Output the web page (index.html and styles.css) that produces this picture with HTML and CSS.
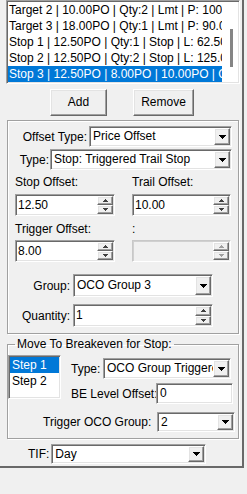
FILE: index.html
```html
<!DOCTYPE html>
<html lang="en">
<head>
  <meta charset="UTF-8">
  <title>Bracket Orders</title>
  <link rel="stylesheet" href="styles.css">
</head>
<body>
  <div class="panel">

    <!-- Order list -->
    <div class="listbox orders sunken">
      <div class="items">
        <div class="item">Target 2 | 10.00PO | Qty:2 | Lmt | P: 100.00</div>
        <div class="item">Target 3 | 18.00PO | Qty:1 | Lmt | P: 90.00</div>
        <div class="item">Stop 1 | 12.50PO | Qty:1 | Stop | L: 62.50</div>
        <div class="item">Stop 2 | 12.50PO | Qty:2 | Stop | L: 125.00</div>
        <div class="item sel">Stop 3 | 12.50PO | 8.00PO | 10.00PO | Qty:3</div>
      </div>
      <div class="vscroll"><div class="thumb"></div></div>
    </div>

    <div class="buttons">
      <div class="btn btn-add">Add</div>
      <div class="btn btn-remove">Remove</div>
    </div>

    <!-- Offset settings -->
    <div class="group offsets">
      <div class="row row-offset">
        <span class="lbl lbl-offset">Offset Type:</span>
        <div class="combo sunken w-offset"><span class="val">Price Offset</span><span class="drop"><svg width="7" height="4" viewBox="0 0 7 4"><path d="M0 0h7v1h-1v1h-1v1h-1v1h-1v-1h-1v-1h-1v-1h-1z"/></svg></span></div>
      </div>
      <div class="row row-type">
        <span class="lbl lbl-type">Type:</span>
        <div class="combo sunken w-type"><span class="val">Stop: Triggered Trail Stop</span><span class="drop"><svg width="7" height="4" viewBox="0 0 7 4"><path d="M0 0h7v1h-1v1h-1v1h-1v1h-1v-1h-1v-1h-1v-1h-1z"/></svg></span></div>
      </div>

      <div class="pair pair-labels first">
        <span>Stop Offset:</span>
        <span>Trail Offset:</span>
      </div>
      <div class="pair pair-spins">
        <div class="spin sunken w-left"><span class="val">12.50</span><span class="arrows"><span class="up"><svg width="5" height="3" viewBox="0 0 5 3"><path d="M2 0h1v1h1v1h1v1h-5v-1h1v-1h1z"/></svg></span><span class="down"><svg width="5" height="3" viewBox="0 0 5 3"><path d="M0 0h5v1h-1v1h-1v1h-1v-1h-1v-1h-1z"/></svg></span></span></div>
        <div class="spin sunken w-right"><span class="val">10.00</span><span class="arrows"><span class="up"><svg width="5" height="3" viewBox="0 0 5 3"><path d="M2 0h1v1h1v1h1v1h-5v-1h1v-1h1z"/></svg></span><span class="down"><svg width="5" height="3" viewBox="0 0 5 3"><path d="M0 0h5v1h-1v1h-1v1h-1v-1h-1v-1h-1z"/></svg></span></span></div>
      </div>

      <div class="pair pair-labels second">
        <span>Trigger Offset:</span>
        <span>:</span>
      </div>
      <div class="pair pair-spins">
        <div class="spin sunken w-left"><span class="val">8.00</span><span class="arrows"><span class="up"><svg width="5" height="3" viewBox="0 0 5 3"><path d="M2 0h1v1h1v1h1v1h-5v-1h1v-1h1z"/></svg></span><span class="down"><svg width="5" height="3" viewBox="0 0 5 3"><path d="M0 0h5v1h-1v1h-1v1h-1v-1h-1v-1h-1z"/></svg></span></span></div>
        <div class="spin sunken w-right disabled"><span class="val"></span><span class="arrows"><span class="up"><svg width="5" height="3" viewBox="0 0 5 3"><path d="M2 0h1v1h1v1h1v1h-5v-1h1v-1h1z"/></svg></span><span class="down"><svg width="5" height="3" viewBox="0 0 5 3"><path d="M0 0h5v1h-1v1h-1v1h-1v-1h-1v-1h-1z"/></svg></span></span></div>
      </div>

      <div class="row row-group">
        <span class="lbl lbl-group">Group:</span>
        <div class="combo sunken w-group tall"><span class="val">OCO Group 3</span><span class="drop"><svg width="7" height="4" viewBox="0 0 7 4"><path d="M0 0h7v1h-1v1h-1v1h-1v1h-1v-1h-1v-1h-1v-1h-1z"/></svg></span></div>
      </div>
      <div class="row row-qty">
        <span class="lbl lbl-group">Quantity:</span>
        <div class="spin sunken w-group tall"><span class="val">1</span><span class="arrows"><span class="up"><svg width="5" height="3" viewBox="0 0 5 3"><path d="M2 0h1v1h1v1h1v1h-5v-1h1v-1h1z"/></svg></span><span class="down"><svg width="5" height="3" viewBox="0 0 5 3"><path d="M0 0h5v1h-1v1h-1v1h-1v-1h-1v-1h-1z"/></svg></span></span></div>
      </div>
    </div>

    <!-- Breakeven -->
    <fieldset class="group breakeven">
      <legend>Move To Breakeven for Stop:</legend>
      <div class="be-top">
        <div class="listbox steps sunken">
          <div class="item sel">Step 1</div>
          <div class="item">Step 2</div>
        </div>
        <div class="be-fields">
          <div class="row">
            <span class="lbl lbl-betype">Type:</span>
            <div class="combo sunken w-betype"><span class="val">OCO Group Triggered</span><span class="drop"><svg width="7" height="4" viewBox="0 0 7 4"><path d="M0 0h7v1h-1v1h-1v1h-1v1h-1v-1h-1v-1h-1v-1h-1z"/></svg></span></div>
          </div>
          <div class="row row-level">
            <span class="lbl lbl-level">BE Level Offset:</span>
            <div class="textbox sunken w-level"><span class="val">0</span></div>
          </div>
        </div>
      </div>
      <div class="row row-trigger">
        <span class="lbl lbl-trigger">Trigger OCO Group:</span>
        <div class="combo sunken w-trigger"><span class="val">2</span><span class="drop"><svg width="7" height="4" viewBox="0 0 7 4"><path d="M0 0h7v1h-1v1h-1v1h-1v1h-1v-1h-1v-1h-1v-1h-1z"/></svg></span></div>
      </div>
    </fieldset>

    <div class="row row-tif">
      <span class="lbl lbl-tif">TIF:</span>
      <div class="combo sunken w-tif"><span class="val">Day</span><span class="drop"><svg width="7" height="4" viewBox="0 0 7 4"><path d="M0 0h7v1h-1v1h-1v1h-1v1h-1v-1h-1v-1h-1v-1h-1z"/></svg></span></div>
    </div>

  </div>
</body>
</html>
```

FILE: styles.css
```css
* {
  box-sizing: border-box;
}

body {
  margin: 0;
  background-color: #f0f0f0;
  font-family: "Liberation Sans", Arial, sans-serif;
  font-size: 12px;
  color: #000;
}

.panel {
  width: 244px;
  height: 468px;
  border-right: 2px solid #696969;
  border-bottom: 2px solid #696969;
  overflow: hidden;
}

/* 3D borders, Windows style */
.sunken {
  border: 1px solid;
  border-color: #a0a0a0 #fff #fff #a0a0a0;
  box-shadow: inset 1px 1px 0 #696969, inset -1px -1px 0 #e3e3e3;
  background-color: #fff;
  padding: 1px;
}

.btn,
.drop,
.arrows .up,
.arrows .down {
  border: 1px solid;
  border-color: #fff #696969 #696969 #fff;
  box-shadow: inset -1px -1px 0 #a0a0a0, inset 1px 1px 0 #e3e3e3;
  background-color: #f0f0f0;
}

/* List boxes */
.listbox .item {
  height: 16px;
  line-height: 16px;
  white-space: nowrap;
  padding-left: 1px;
}

.listbox .item.sel {
  background-color: #0078d7;
  color: #fff;
}

.orders {
  display: flex;
  margin-left: 6px;
  width: 234px;
  height: 84px;
}

.orders .items {
  flex: 1;
  overflow: hidden;
}

.vscroll {
  width: 16px;
  padding: 27px 0 0 8px;
}

.thumb {
  width: 3px;
  height: 38px;
  background-color: #858585;
}

/* Add / Remove */
.buttons {
  display: flex;
  gap: 26px;
  margin-top: 5px;
  padding-left: 50px;
}

.btn {
  height: 27px;
  line-height: 25px;
  text-align: center;
}

.btn-add {
  width: 57px;
}

.btn-remove {
  width: 61px;
}

/* Group boxes */
.group {
  margin: 0 0 0 7px;
  width: 232px;
  border: 1px solid #a0a0a0;
  box-shadow: 1px 1px 0 #fff, inset 1px 1px 0 #fff;
}

.offsets {
  margin-top: 4px;
  height: 214px;
}

.row {
  display: flex;
  align-items: center;
}

.lbl {
  white-space: nowrap;
}

/* Combo boxes, spinners, text boxes */
.combo,
.spin,
.textbox {
  display: flex;
  height: 21px;
}

.combo .val,
.spin .val,
.textbox .val {
  flex: 1;
  overflow: hidden;
  white-space: nowrap;
  line-height: 17px;
  padding-left: 2px;
}

.spin .val {
  padding-left: 1px;
}

.drop {
  width: 16px;
  display: flex;
  align-items: center;
  justify-content: center;
}

.arrows {
  width: 16px;
  display: flex;
  flex-direction: column;
}

.arrows .up,
.arrows .down {
  flex: 1;
  display: flex;
  align-items: center;
  justify-content: center;
}

.drop svg,
.arrows svg {
  display: block;
  fill: #000;
}

.arrows svg {
  fill: #404040;
}

.tall {
  height: 23px;
}

.tall .val {
  line-height: 19px;
}

.spin.w-left,
.spin.w-right {
  height: 22px;
}

.spin.w-left .val,
.spin.w-right .val {
  line-height: 18px;
}

.disabled {
  background-color: #f0f0f0;
  border-color: #c8c8c8 #fff #fff #c8c8c8;
  box-shadow: inset 1px 1px 0 #d0d0d0, inset -1px -1px 0 #f0f0f0;
}

.disabled .arrows svg {
  fill: #a0a0a0;
}

/* Offset group rows */
.row-offset {
  margin-top: 5px;
}

.lbl-offset {
  width: 79px;
  text-align: right;
  margin-right: 2px;
}

.w-offset {
  width: 143px;
}

.row-type {
  margin-top: 2px;
}

.lbl-type {
  width: 41px;
  text-align: right;
  margin-right: 1px;
}

.w-type {
  width: 182px;
}

.pair {
  display: grid;
  grid-template-columns: 117px 99px;
  padding-left: 7px;
}

.pair-labels {
  line-height: 14px;
}

.pair-labels.first {
  margin-top: 5px;
}

.pair-labels.second {
  margin-top: 6px;
}

.pair-spins {
  margin-top: 5px;
}

.pair-spins + .pair-labels {
  margin-top: 6px;
}

.pair-labels.second + .pair-spins {
  margin-top: 4px;
}

.w-left {
  width: 100px;
}

.w-right {
  width: 99px;
}

.row-group {
  margin-top: 12px;
}

.row-qty {
  margin-top: 7px;
}

.lbl-group {
  width: 62px;
  text-align: right;
  margin-right: 3px;
}

.w-group {
  width: 140px;
}

/* Breakeven group */
.breakeven {
  margin-top: 3px;
  padding: 0;
  min-width: 0;
  height: 102px;
}

.breakeven legend {
  margin-left: 7px;
  padding: 0 2px;
  line-height: 14px;
}

.be-top {
  display: flex;
  align-items: flex-start;
}

.steps {
  margin-top: 4px;
  width: 53px;
  height: 44px;
}

.steps .item {
  padding-left: 2px;
}

.be-fields {
  margin-top: 7px;
  padding-left: 10px;
}

.lbl-betype {
  width: 32px;
}

.w-betype {
  width: 128px;
}

.row-level {
  margin-top: 4px;
}

.lbl-level {
  width: 85px;
}

.w-level {
  width: 77px;
}

.row-trigger {
  margin-top: 8px;
  padding-left: 35px;
}

.lbl-trigger {
  width: 109px;
  margin-right: 5px;
}

.w-trigger {
  width: 78px;
  height: 20px;
}

.w-trigger .val {
  line-height: 16px;
}

/* TIF */
.row-tif {
  margin-top: 5px;
  padding-left: 28px;
}

.lbl-tif {
  margin-right: 2px;
}

.w-tif {
  width: 155px;
  height: 20px;
}

.w-tif .val {
  line-height: 16px;
}
```
